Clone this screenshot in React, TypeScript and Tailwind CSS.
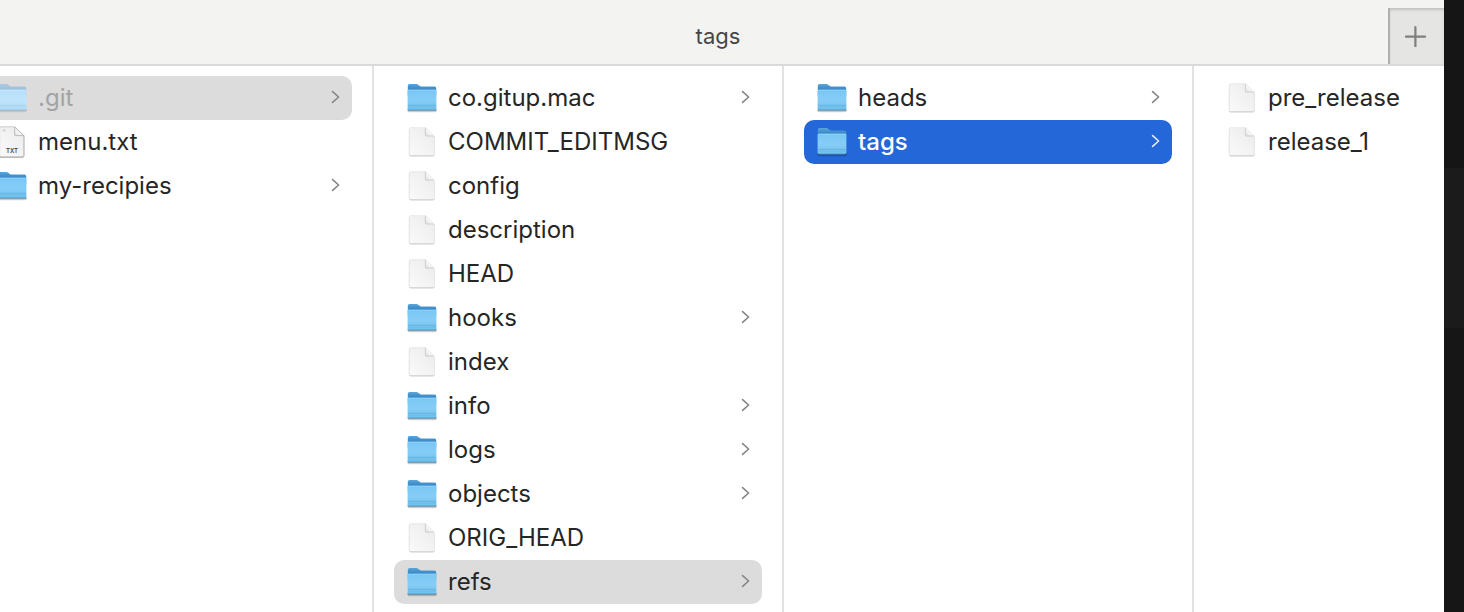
import { clsx } from "clsx";

type Kind = "folder" | "file" | "txt";
type State = "plain" | "path" | "active";

interface Entry {
  name: string;
  kind: Kind;
  state?: State;
  dimmed?: boolean;
}

const columns: { label: string; entries: Entry[] }[] = [
  {
    label: "project",
    entries: [
      { name: ".git", kind: "folder", state: "path", dimmed: true },
      { name: "menu.txt", kind: "txt" },
      { name: "my-recipies", kind: "folder" },
    ],
  },
  {
    label: ".git",
    entries: [
      { name: "co.gitup.mac", kind: "folder" },
      { name: "COMMIT_EDITMSG", kind: "file" },
      { name: "config", kind: "file" },
      { name: "description", kind: "file" },
      { name: "HEAD", kind: "file" },
      { name: "hooks", kind: "folder" },
      { name: "index", kind: "file" },
      { name: "info", kind: "folder" },
      { name: "logs", kind: "folder" },
      { name: "objects", kind: "folder" },
      { name: "ORIG_HEAD", kind: "file" },
      { name: "refs", kind: "folder", state: "path" },
    ],
  },
  {
    label: "refs",
    entries: [
      { name: "heads", kind: "folder" },
      { name: "tags", kind: "folder", state: "active" },
    ],
  },
  {
    label: "tags",
    entries: [
      { name: "pre_release", kind: "file" },
      { name: "release_1", kind: "file" },
    ],
  },
];

function IconGradients() {
  return (
    <svg className="absolute size-0" aria-hidden="true">
      <defs>
        <linearGradient id="folder-back" x1="0" y1="0" x2="0" y2="1">
          <stop offset="0" stopColor="#5aa6da" />
          <stop offset="0.35" stopColor="#3f8dc9" />
          <stop offset="1" stopColor="#3f8dc9" />
        </linearGradient>
        <linearGradient id="folder-front" x1="0" y1="0" x2="0" y2="1">
          <stop offset="0" stopColor="#79c6f3" />
          <stop offset="0.5" stopColor="#85cdf7" />
          <stop offset="1" stopColor="#72bfec" />
        </linearGradient>
        <linearGradient id="folder-back-dimmed" x1="0" y1="0" x2="0" y2="1">
          <stop offset="0" stopColor="#a9c9e0" />
          <stop offset="1" stopColor="#8fb9d8" />
        </linearGradient>
        <linearGradient id="folder-front-dimmed" x1="0" y1="0" x2="0" y2="1">
          <stop offset="0" stopColor="#b6dff8" />
          <stop offset="0.5" stopColor="#bee5fc" />
          <stop offset="1" stopColor="#b2dbf4" />
        </linearGradient>
        <linearGradient id="paper" x1="0" y1="1" x2="1" y2="0">
          <stop offset="0" stopColor="#fafafa" />
          <stop offset="1" stopColor="#ebebeb" />
        </linearGradient>
        <linearGradient id="paper-fold" x1="0" y1="1" x2="1" y2="0">
          <stop offset="0" stopColor="#dadada" />
          <stop offset="0.5" stopColor="#fdfdfd" />
          <stop offset="1" stopColor="#ffffff" />
        </linearGradient>
      </defs>
    </svg>
  );
}

function FolderIcon({ dimmed }: { dimmed?: boolean }) {
  const line = dimmed ? "#a2cfea" : "#5fb0df";
  return (
    <svg viewBox="0 0 32 32" className="size-8 shrink-0" aria-hidden="true">
      <g fill="#000" opacity={dimmed ? 0.5 : 1}>
        <rect x="1.8" y="27.6" width="28.6" height="2.6" rx="1.2" opacity="0.14" />
        <rect x="1.4" y="26.6" width="29.4" height="2.6" rx="1.2" opacity="0.3" />
      </g>
      <path
        d="M1.8 3.8Q1.8 2 3.6 2H10.2Q11.4 2 12.3 2.8L13.4 3.8Q14.2 4.6 15.4 4.6H28.6Q30.2 4.6 30.2 6.2V14H1.8Z"
        fill={dimmed ? "url(#folder-back-dimmed)" : "url(#folder-back)"}
      />
      <path
        d="M1.6 8.8Q1.6 7.8 2.6 7.8H29.4Q30.4 7.8 30.4 8.8V26.8Q30.4 28.2 29 28.2H3Q1.6 28.2 1.6 26.8Z"
        fill={dimmed ? "url(#folder-front-dimmed)" : "url(#folder-front)"}
      />
      <path d="M2.2 8.3H29.8" stroke={dimmed ? "#cdeafb" : "#97d7fa"} strokeWidth="0.8" />
      <path d="M2 23.4H30" stroke={line} strokeWidth="0.8" />
      <path d="M2 25.2H30" stroke={line} strokeWidth="0.4" />
      <path d="M2.4 27.8H29.6" stroke={dimmed ? "#9cc8e3" : "#559fcb"} strokeWidth="0.8" />
    </svg>
  );
}

function PlainFileIcon() {
  return (
    <svg viewBox="0 0 32 32" className="size-8 shrink-0" aria-hidden="true">
      <path
        d="M4.6 2H19.6L28.8 11V28.8Q28.8 30.6 27 30.6H4.6Q2.8 30.6 2.8 28.8V3.8Q2.8 2 4.6 2Z"
        fill="#000"
        opacity="0.14"
      />
      <path
        d="M4.8 1.6H19.4L28.4 10.4V28.2Q28.4 29.6 27 29.6H4.8Q3.4 29.6 3.4 28.2V3Q3.4 1.6 4.8 1.6Z"
        fill="url(#paper)"
        stroke="#e0e0e0"
        strokeWidth="0.5"
      />
      <path d="M19.4 1.8V9.2Q19.4 10 20.2 10H28Z" fill="url(#paper-fold)" />
      <path d="M19.4 1.8V9.2Q19.4 10 20.2 10H28" fill="none" stroke="#c6c6c6" strokeWidth="0.8" />
      <path d="M19.4 1.8L28 10" stroke="#dcdcdc" strokeWidth="0.5" />
      <path d="M4.2 29.7H27.6" stroke="#cfcfcf" strokeWidth="0.8" />
    </svg>
  );
}

function TextFileIcon() {
  return (
    <svg viewBox="0 0 32 32" className="size-8 shrink-0" aria-hidden="true">
      <path
        d="M5 1H19L28.4 9.8V30Q28.4 31.8 26.6 31.8H5Q3.2 31.8 3.2 30V2.8Q3.2 1 5 1Z"
        fill="#000"
        opacity="0.35"
      />
      <path
        d="M5.2 0.8H18.6L27.8 9.6V29.2Q27.8 30.8 26.2 30.8H5.2Q3.6 30.8 3.6 29.2V2.4Q3.6 0.8 5.2 0.8Z"
        fill="url(#paper)"
        stroke="#b9b9b9"
        strokeWidth="0.7"
      />
      <path d="M18.6 1V8.8Q18.6 9.6 19.4 9.6H27.6Z" fill="url(#paper-fold)" />
      <path
        d="M18.6 1V8.8Q18.6 9.6 19.4 9.6H27.6Z"
        fill="none"
        stroke="#a8a8a8"
        strokeWidth="0.7"
      />
      <path d="M6.8 3.6H9M6.8 4.9H10" stroke="#bdbdbd" strokeWidth="0.7" />
      <text
        x="16"
        y="27"
        textAnchor="middle"
        fontFamily="Inter, sans-serif"
        fontSize="6"
        fontWeight="600"
        fill="#3f3f3f"
      >
        TXT
      </text>
    </svg>
  );
}

function Chevron({ active }: { active: boolean }) {
  return (
    <svg
      viewBox="0 0 10 16"
      className={clsx("mb-0.5 h-4 w-2.5 shrink-0", active ? "text-[#e4edfb]" : "text-[#858585]")}
      fill="none"
      stroke="currentColor"
      strokeWidth="1.6"
      strokeLinecap="round"
      strokeLinejoin="round"
      aria-hidden="true"
    >
      <path d="M2.6 2.6L8.6 8L2.6 13.4" />
    </svg>
  );
}

function EntryIcon({ kind, dimmed }: { kind: Kind; dimmed?: boolean }) {
  if (kind === "folder") return <FolderIcon dimmed={dimmed} />;
  return kind === "txt" ? <TextFileIcon /> : <PlainFileIcon />;
}

function Row({ entry }: { entry: Entry }) {
  const { name, kind, state = "plain", dimmed } = entry;
  return (
    <li>
      <button
        type="button"
        aria-current={state === "plain" ? undefined : "true"}
        className={clsx(
          "flex h-11 w-full items-center gap-2.5 rounded-[10px] px-3 text-left text-2xl",
          state === "path" && "bg-[#dcdcdc]",
          state === "active" && "bg-[#2467d9]",
          state === "active" ? "font-medium text-white" : dimmed ? "text-[#a3a3a3]" : "text-[#262626]",
        )}
      >
        <EntryIcon kind={kind} dimmed={dimmed} />
        <span className="flex-1 whitespace-nowrap">{name}</span>
        {kind === "folder" && <Chevron active={state === "active"} />}
      </button>
    </li>
  );
}

export default function App() {
  return (
    <div className="flex min-h-screen bg-[#171717] font-['Inter',sans-serif]">
      <IconGradients />
      <div className="flex min-w-0 flex-1 flex-col overflow-hidden bg-white">
        <header className="flex h-[66px] items-end border-b-2 border-[#dadad9] bg-[#f3f3f1]">
          <h1 className="flex h-14 flex-1 items-center justify-center pl-12 text-[22px] text-[#454545]">
            tags
          </h1>
          <button
            type="button"
            aria-label="New tab"
            className="flex h-14 w-14 items-center justify-center border-l-2 border-[#b0b0af] bg-[#e5e5e3] pr-0.5 shadow-[inset_0_3px_3px_-1px_#c0c0bf]"
          >
            <svg
              viewBox="0 0 22 22"
              className="size-[22px]"
              stroke="#7f7f7e"
              strokeWidth="2.2"
              strokeLinecap="round"
              aria-hidden="true"
            >
              <path d="M10.4 2V21.2M0.9 11.6H20.1" />
            </svg>
          </button>
        </header>
        <main className="-ml-9 flex flex-1">
          {columns.map((column, index) => {
            const last = index === columns.length - 1;
            return (
              <ul
                key={column.label}
                aria-label={column.label}
                className={clsx(
                  "px-5 pt-2.5 pb-2",
                  last ? "min-w-0 flex-1" : "w-[410px] shrink-0 border-r-2 border-[#e2e2e2]",
                )}
              >
                {column.entries.map((entry) => (
                  <Row key={entry.name} entry={entry} />
                ))}
              </ul>
            );
          })}
        </main>
      </div>
      <div className="flex w-5 shrink-0 flex-col bg-[#161616]">
        <div className="h-[168px] bg-[#151515]" />
        <div className="h-40 bg-[#1b1b1b]" />
      </div>
    </div>
  );
}
